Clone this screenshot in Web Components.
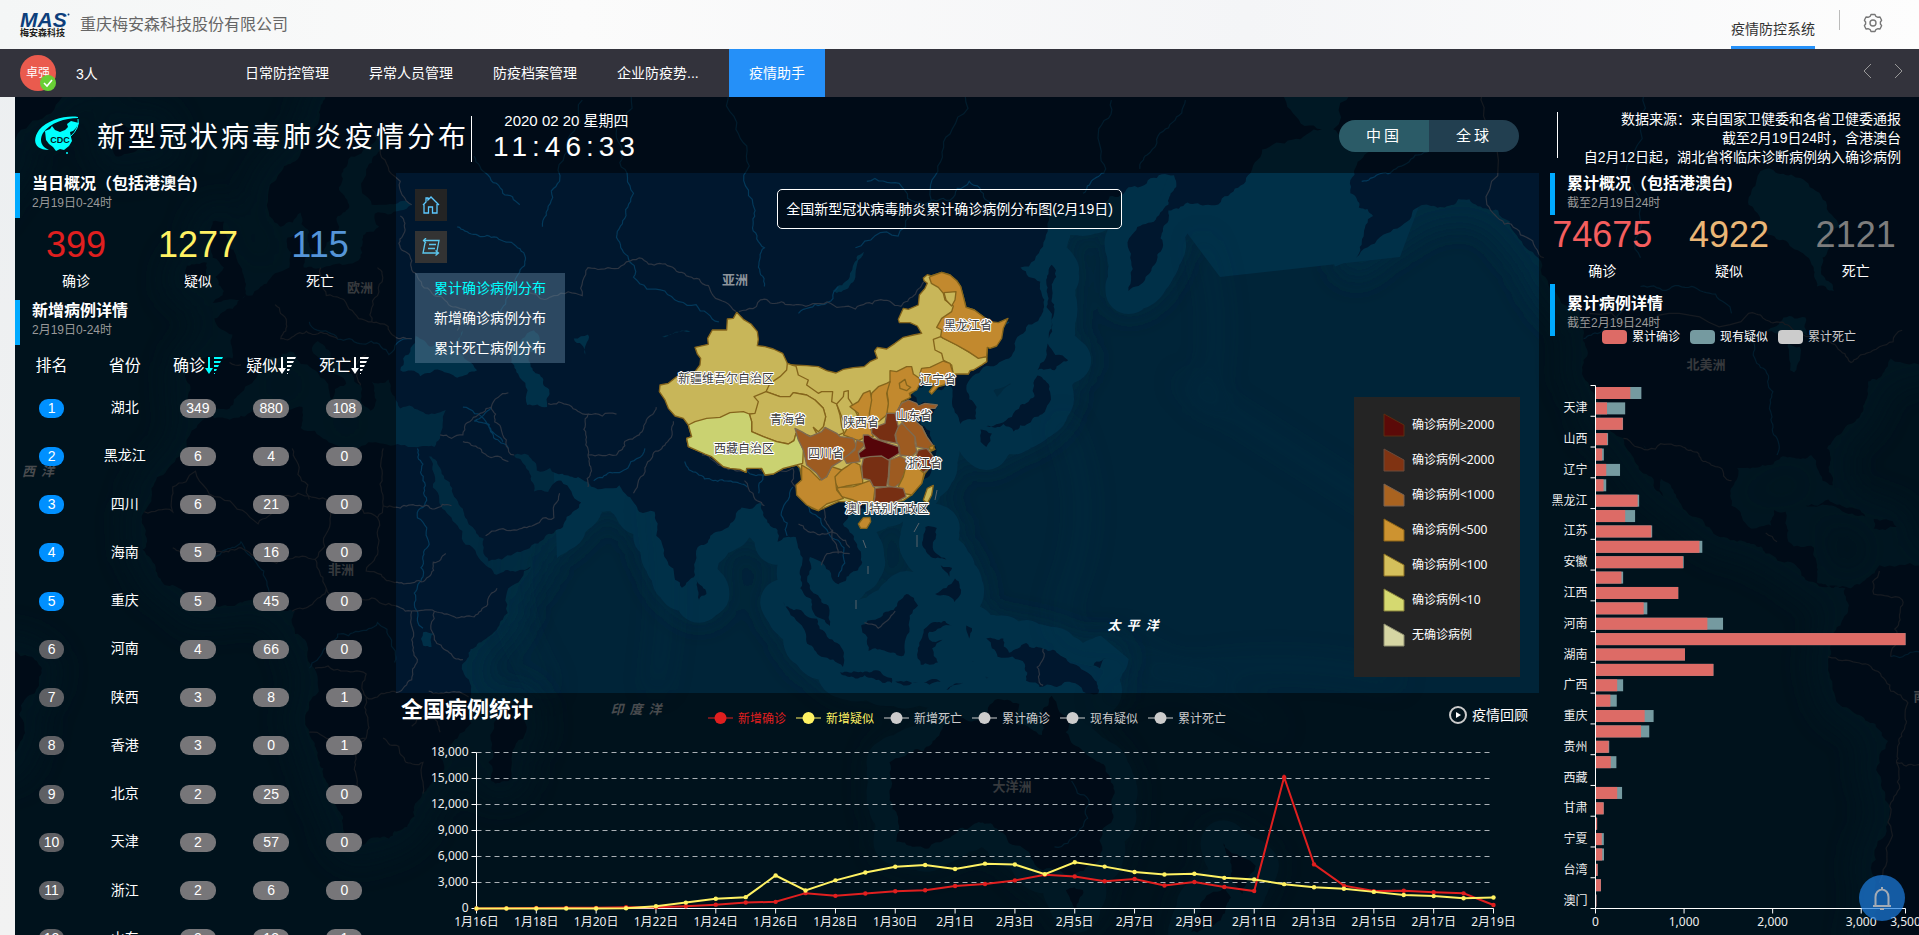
<!DOCTYPE html>
<html lang="zh-CN">
<head>
<meta charset="utf-8">
<title>疫情防控系统</title>
<style>
html,body{margin:0;height:100%}
body{display:flex;flex-direction:column;min-height:100vh;overflow:hidden;background:linear-gradient(#eceff1,#f2f2f2);font:14px/20px "Liberation Sans","Noto Sans CJK SC",sans-serif;color:#fff}
epidemic-board{flex:1;min-height:0;margin-left:15px}
</style>
</head>
<body>
<app-header></app-header>
<nav-bar></nav-bar>
<epidemic-board></epidemic-board>

<script>
function define(name, css, html, setup) {
  const tpl = document.createElement('template');
  tpl.innerHTML = '<style>*{box-sizing:border-box}button{font:inherit;color:inherit;border:0;background:none;padding:0;cursor:pointer}a{color:inherit;text-decoration:none}' + css + '</style>' + html;
  customElements.define(name, class extends HTMLElement {
    constructor() {
      super();
      this.attachShadow({ mode: 'open' }).append(tpl.content.cloneNode(true));
    }
    connectedCallback() { if (setup) setup(this, this.shadowRoot); }
  });
}

/* ---------- top bars ---------- */
define('app-header', `
:host{display:flex;align-items:center;height:49px;flex:none;padding:0 20px;color:#666;background:linear-gradient(90deg,#f4f6f6,#fbfbfb 30%,#f4f5f7 65%,#fdfdfd)}
.logo{display:flex;flex-direction:column;width:50px;margin-right:10px;font-weight:bold;color:#231f20;font-size:9px;line-height:10px;position:relative}
.logo b{font:italic bold 21px/17px "Liberation Sans",sans-serif;color:#0d3f7c}
.logo svg{position:absolute;right:0;top:2px}
.name{flex:1;font-size:16px;line-height:22px}
a{height:49px;padding-top:19px;line-height:20px;border-bottom:3px solid #2590f8;color:#333}
i{width:1px;height:20px;background:#bbb;margin:0 23px 9px 24px}
button{height:24px;margin-right:16px}`,
`<div class="logo"><b>MAS</b><span>梅安森科技</span><svg width="3" height="3"><circle cx="1.500" cy="1.500" r="1" fill="#0d3f7c"/></svg></div>
<span class="name">重庆梅安森科技股份有限公司</span>
<a href="#system">疫情防控系统</a><i></i>
<button aria-label="设置"><svg width="20" height="20" viewBox="0 0 20 20" fill="none" stroke="#777" stroke-width="1.400" stroke-linejoin="round"><path d="M8 1.500h4l.8 1.800 2.200 1 2-.3 1.600 3.300-1.200 1.700v2l1.200 1.700L17 16l-2-.3-2.200 1L12 18.500H8l-.8-1.800-2.200-1-2 .3-1.600-3.300L2.600 11V9L1.400 7.300 3 4l2 .3 2.200-1z"/><circle cx="10" cy="10" r="3"/></svg></button>`);

define('nav-bar', `
:host{display:flex;align-items:center;height:48px;flex:none;background:#33333c;padding:0 11px 0 20px}
.avatar{position:relative;width:36px;height:36px;border-radius:50%;background:#ea5b4e;font-size:12px;line-height:36px;padding-left:6px;white-space:nowrap}
.avatar svg{position:absolute;right:0;bottom:0}
.count{width:149px;margin-left:20px;padding-top:2px}
nav{display:flex;flex:1}
a{padding:0 20px;line-height:48px}
a.wide{width:132px}
a.on{background:#2590f8}
button{width:20px;height:20px;margin-left:10px}`,
`<div class="avatar">卓强<svg width="16" height="16"><circle cx="8" cy="8" r="8" fill="#69cf35"/><path d="M4 8l3 3 5-6" fill="none" stroke="#fff" stroke-width="1.600"/></svg></div>
<span class="count">3人</span>
<nav><a href="#daily">日常防控管理</a><a href="#abnormal">异常人员管理</a><a href="#files">防疫档案管理</a><a class="wide" href="#trend">企业防疫势...</a><a class="on" href="#assistant">疫情助手</a></nav>
<button aria-label="向左"><svg width="20" height="20" fill="none" stroke="#999"><path d="M13 1l-7 7 7 7"/></svg></button>
<button aria-label="向右"><svg width="20" height="20" fill="none" stroke="#999"><path d="M7 1l7 7-7 7"/></svg></button>`);

/* ---------- world map: Web Mercator, zoom level 3 ---------- */
const px = lon => 241 + lon * 5.689;
const py = lat => 634 - 325.95 * Math.log(Math.tan(Math.PI / 4 + lat * Math.PI / 360));
let seed = 7;
const rnd = () => (seed = (seed * 16807) % 2147483647) / 2147483647 - .5;
function rough(a, b, depth, out) {
  const dx = b[0] - a[0], dy = b[1] - a[1], len = Math.hypot(dx, dy);
  if (!depth || len < 4) { out.push(b); return; }
  const k = rnd() * .36;
  const m = [(a[0] + b[0]) / 2 - dy * k, (a[1] + b[1]) / 2 + dx * k];
  rough(a, m, depth - 1, out);
  rough(m, b, depth - 1, out);
}
function trace(text, closed) {
  const pts = text.trim().split(/\s+/).map(p => p.split(',').map(Number)).map(([x, y]) => [px(x), py(y)]);
  if (closed) pts.push(pts[0]);
  const out = [pts[0]];
  for (let i = 1; i < pts.length; i++) rough(pts[i - 1], pts[i], 4, out);
  return 'M' + out.map(p => p[0].toFixed(1) + ',' + p[1].toFixed(1)).join('L') + (closed ? 'Z' : '');
}
const LAND = [
'25,72 18,69.5 14,67.5 12,65 9,63.5 5,61.5 5,59 7,58 10.5,59.3 12,57.5 13,55.5 14.5,55.6 16.5,57 17,59 19,60 17.2,61.5 18,63 21.5,64.5 24,65.8 25.5,65 22,63 21.3,61 23,60 28,60.3 30,60 28,59.5 23.5,59.2 24.3,58 22,57.5 21,56 21,55 19,54.4 14.5,54 11,54 10.7,56 10.5,57.7 8.2,57 8.5,54 6,53.4 4.5,52.3 2,51 -1.5,49.5 -4.7,48.4 -1.5,46.5 -1.5,43.5 -8.5,43.7 -9.3,38.7 -8.8,37 -6,36.2 -2,36.8 0,39 3,42 4,43.4 8.5,44.4 10.5,42.8 14,41 16,38 16.5,39.5 18.5,40.2 15,42 12.5,44.5 13.5,45.7 16,43.5 19.5,41.5 21,38 22.8,36.5 23.8,38 23,40.5 26,40.8 27,38.5 28,36.8 32,36.3 36,36.6 35,32.5 34,31.2 30,31.2 25,31.7 20,31 19.5,30.4 15,32.3 10.5,34 10.8,37 3,36.9 -2,35.2 -5.5,35.8 -9.5,31 -13,27.7 -17,21 -16.5,16 -17.3,14.7 -15,11 -13,8.5 -8,4.4 -2,4.9 4,6.4 6,4.4 9.5,4 9.5,0 12,-5 13.7,-10 12,-17 14.5,-23 17,-29.5 18.4,-34 20,-34.8 26,-33.8 30.5,-30.5 33,-26 35.5,-23.5 35,-20 40.5,-15.5 40.3,-11 39,-6.5 41.5,-1.8 46,2.5 51,11.8 44.5,10.5 43,12 39.5,15.5 37.2,19.5 34,27 32.6,29.9 35,28 39,21.5 42.7,16.5 43.5,12.7 48,14 52.2,15.7 55,17.5 59.8,22.5 56.3,26 54,24.2 51.5,24.3 51,26 48,30 50.5,30 52,27.6 56.5,27.1 61.5,25.1 66.5,25.3 68,23.5 70,21 72.7,21 73,17 74.8,13 76.3,9.5 77.5,8.1 79.8,10.3 80.2,15 82.5,17 87,20.7 88,21.7 91.5,22.5 94.3,18 94.3,16 97.5,16.8 98.6,12 98.3,8 100.3,6 101.3,3 103.5,1.4 103.4,4.5 101,7 99.5,9.5 100,13.4 102.3,12.3 105,8.7 107,10.5 109.2,12.5 108,16 105.8,19 108,21.5 110.3,21.2 114,22.4 117,23.6 119.7,26 121.8,29 121.8,31.5 119.3,35 122.5,37.2 119,37.3 117.7,39 121.7,40.7 121.5,39 124.5,40 125,38 126.5,34.6 129.2,35.3 129.3,37 127.5,39.5 130.5,42.4 135,43.5 140.4,48.5 140.5,52.5 137,54 142,59 150,59.5 156,61.5 164,62.5 163,60 157,57.5 156,51.5 159,53 162,56 163,59.5 170,60 177,62.5 179.5,64.5 190,66 182,69 175,71 140,73',
'192,66 199,64.5 195,61 199,59 196,55 205,58.5 208,60 214,60.5 221,59.5 228,55 235,49.5 236,47 235.8,42 239,35 243,32.5 245,29 250,23.5 249,28 246.5,31.5 250,26 254.5,20.5 263,16 268,14 272.5,12.5 275,9.5 280,8.5 282,8 282.5,4 279.8,-1 279,-5 284,-14 289.5,-18.5 289,-28 286.5,-38 286,-48 302,-48 302,10 288,12 283,8 277,9 276.5,15 272,16 271.5,21 269.5,21.3 269,18.7 265.5,18.2 262,22 263,28 270,29.2 276,30 278,26 279.8,25.3 278.8,31 284,35.3 286,40.5 290,43.5 302,46 302,72 200,72',
'-5,50.2 1,51 0.5,53 -2,56 -3,58.5 -5,58.5 -5,55 -3,54 -4.5,53 -3,51.5','-10,52 -6,52.3 -6,54.5 -9.5,54.2','-22,64 -14,64.6 -15,66.3 -23,66',
'44,-25 47,-25 50,-15.5 49,-12 44.5,-16 43.5,-22','80,9.5 81.8,7 80.5,6','95.3,5.6 98,4.3 103,-.5 106,-3.3 105.8,-5.8 102,-4 98.6,1.5','105.3,-6.7 108.5,-6.7 114.4,-7.7 114.4,-8.6 108,-7.8',
'109,1.5 111.5,2.5 117,7 119,5 117.5,1 116.5,-3.8 110.3,-3','119.5,-5.4 119,-3 120,.8 125,1.6 121,.4 121,-1 123.3,-1 121.5,-2.5 122.5,-5','120.3,18.5 122.3,18.3 121.6,15.5 124,13 121,13.7 120,15','122,7 125.5,9.7 126.5,7 125.4,5.6','115,-8.3 119,-8.5 117,-9','120,-8.4 123,-8.4 121,-8.9','124,-9.8 127,-8.5 125,-9','127.5,1.5 128.5,1 128,-.8','123,12 125,11.5 124.5,10',
'131,34.3 135.5,35.6 137,37.3 139.5,38.5 140,41.3 142,39.5 140.8,36 138.5,34.7 135.8,33.5 134,34.6','130,33.8 132,33.2 131,31.2 130,32','140,42 141.8,45.4 145.4,43.3 143,42','142,46 143,49.5 143.3,53 142.5,54.3 141.8,51',
'131,-.8 134,-.8 135,-3.3 138,-1.6 144,-3.8 147.7,-6.2 150.5,-10.5 146,-8.5 143,-9.2 138,-8.2 137.8,-5.3 133,-4 132,-2.5','149,-5.8 152,-4.2 151,-6','114,-22 114,-26.5 115.7,-32 115.2,-34.3 118,-35 123.5,-34 129,-31.6 134,-33 138,-35.5 141,-38.3 146,-39 150,-37.5 153.2,-31 153.2,-25.5 149,-21 146,-18.8 145.3,-15 142.5,-10.8 141,-13 140.8,-17.5 136.5,-15.8 136.8,-12.2 132.5,-11.5 129.5,-15 125.5,-14.3 122.2,-18 117,-20.7','145,-41 148,-41 147,-43.5',
'172.7,-34.5 178.4,-37.7 176,-41.5 174,-39','172.7,-40.7 174,-42 171,-45.5 167,-46.3','-40,-3 -35,-6 -35.5,-9 -39,-14 -40,-22 -47,-22 -47,-3','-45,60 -40,65 -30,68.5 -22,70 -45,72','275,22 279,23 285.5,20.2 281,21.5','287,19.8 291,18.5 287,18.2'];
const LAKES = ['28,42 28.5,43.5 30.7,46.3 33.5,45 36,45 39,47 38,44.5 41.5,42 38,41 35,42 31.5,41.2','47,45 51.5,47 53,45 50.5,44.5 53,41 53.8,37 50.3,37.3 49,41 47.5,43','104,51.5 107,53 109.5,55.6 108,53 105.5,51.4','265,60 268,63 275,62 281,58 278,55 280,51.5 277,52 275,55.2 267.5,57.5','58.5,46 61,46.5 60.500,44','74,46.2 79,46.8 76,46.600','32,0.3 34,.2 33.5,-2.3 32,-2','268,47 275,48.5 275.5,46.4 270,46.6','272,45.5 274,45 273,41.7 272.3,42'];
const BORDERS = ['50,51.5 55,51 60,51 61,54 70,55 77,53.5 83,51 87,49.2','87.5,49.2 92,50.6 98,50 103,50.3 108,49.5 116,49.8 120,52.5','23,66 28,62 30,60','28,59 28,56 31,53 34,51 40,49 38,47','24,54 24,51 23,48 28,46 30,46','14,54 15,51 19,49.5 23,48','6,50 8,48 7,46 13,46.5 17,46','22,44 20,42 21,40','0,42.7 -2,43','35,33 39,33 44,37 47,39','44,37 46,33 48,30','39,32 42,31 47,29','43,17 48,18 55,20 56,24','61,25 61,30 61,36 54,37.5','61,30 66,30 70,33 73,37','66,36 61,36','69,24 71,28 75,32 76,35','81,30 85,28 88,27.5 92,27.5 97,28','88.5,26 90,24 92,22','97,28 98,24 101,21.5 103,22.5','98,19 101,17.500 104,18 105,14','102,22 103,19 105,17 107,15','102,12 103,14 107,14','-17,21 -12,21 -12,25 -8,27.500 3,19 10,24 15,23 24,20 25,22 25,31','25,22 31,22 37,22','24,20 24,15 22,11 27,9 33,10 36,14','-12,15 -6,15 0,15 4,13 13,13 15,23','9,31 10,27 12,23','13,13 15,8 9,4','15,8 19,5 27,5 31,4 34,4 41,3 45,8','30,4 30,-1 30,-8 24,-11 22,-11 22,-7 13,-6','34,4 34,-1 39,-4.500','33,-10 40,-11','22,-11 22,-18 12,-17','22,-18 20,-22 20,-28 17,-28.500','25,-18 29,-22 32,-22 32,-27','30,-16 33,-14 35,-17','219,69 219,60 226,57 229,55','237,49 265,49 270,48 277,46 283,43 288,45 292,47','243,32.5 252,31.4 257,29 262,26','268,17.500 270,16','288,11 287,7 292,6 291,-1 290,-4','279,-4 284,-5 290,-10 293,-12 292,-17 291,-22 290,-30 288,-40','291,-22 298,-22','141,-2.600 141,-9','109.600,2 112,1 115,4'];
const RIVERS = ['70,72 66,66 69,61 66,57 69,53 80,50 84,48','82,72 87,66 90,60 92,56 92,52','127,72 125,66 121,60 108,56','105,52 102,50 98,49','110,62 120,60 128,62 135,60','45,48 48,52 50,55 44,57 38,58','31,31 32,26 31,20 33,16 32,10 31,4 32,1','44,37 41,35 46,32','47,31 43,35 39,37','62,26 68,28 71,31','89,25 83,26 78,29','91,24 92,27 87,29','105,10 106,15 103,18 100,21 98,28','96,17 95,21 97,25','5,6 4,11 0,16 -5,13','12,-6 17,0 24,2 27,-5','30,46 26,44 19,46 12,48','135,48 131,48 127,50 121,53','250,70 244,62 246,55','270,30 269,36 268,42 266,47','262,49 255,52 246,52','236,46 241,48 243,50','308,-2 298,-3 290,-4','143,-35 147,-33 149,-28 146,-25','153,68 152,63 148,61','60,68 56,62 53,58','41,64 46,61 49,60','166,68 161,65 158,63','210,65 203,63 197,62'];
const C = { y:'#c8b659', t:'#cad271', o:'#c2892e', b:'#9d5b21', r:'#772f13', d:'#550509' };
const PROV = [
['y','290,187 310,208 333,222 352,245 355,268 352,287 375,290 400,297 428,310 442,340 455,345 500,347 535,350 560,362 588,369 610,358 640,353 672,350 690,335 712,325 704,303 712,292 740,297 765,280 790,262 820,255 845,250 832,228 810,218 778,218 775,208 790,175 805,178 835,165 838,135 855,115 862,100 852,92 850,84 862,74 874,78 905,67 930,75 950,92 962,110 970,140 978,172 1003,180 1030,200 1050,215 1040,320 1040,335 1025,345 1000,360 990,362 985,372 965,370 940,372 912,405 845,385 820,425 808,435 785,455 820,458 850,490 815,515 845,530 860,560 885,598 870,605 880,625 872,650 855,670 845,700 815,735 790,752 700,765 650,755 595,755 535,782 515,775 500,762 470,733 470,705 485,690 480,655 470,645 430,655 400,672 375,675 365,655 320,655 318,667 300,658 270,655 250,650 215,620 195,612 145,590 140,565 155,560 145,525 130,505 105,498 85,475 75,450 58,425 60,405 85,400 110,380 165,365 180,345 182,325 172,312 165,292 205,283 203,265 217,240 235,240 260,240 262,207 280,205'],
['y','455,345 442,340 440,360 420,380 390,400 378,425 420,440 450,440 460,428 500,435 525,450 550,475 557,500 550,530 520,532 535,560 585,560 612,548 605,530 600,495 590,462 575,455 578,425 545,425 535,430 500,405 505,390 475,375 468,348'],
['y','342,440 378,425 420,440 450,440 460,428 500,435 525,450 550,475 557,500 550,530 535,545 520,532 535,560 510,558 480,548 468,550 462,572 445,582 410,575 370,560 335,545 335,515 328,492 345,490 355,455'],
['y','590,462 610,440 612,425 625,422 625,445 635,460 652,495 648,520 620,535 605,500'],
['t','145,525 165,515 200,505 240,502 270,488 310,485 328,492 335,515 335,545 370,560 410,575 445,582 462,572 468,550 480,575 490,600 488,640 470,645 430,655 400,672 375,675 365,655 320,655 318,667 300,658 270,655 250,650 215,620 195,612 145,590 140,565 155,560'],
['y','902,260 950,285 985,305 1015,322 1040,320 1040,335 1025,345 1000,360 990,362 985,372 940,372 935,345 910,330 905,310 885,300 880,268'],
['o','874,78 905,67 930,75 950,92 962,110 970,140 978,172 1003,180 1030,200 1050,215 1075,218 1104,205 1090,235 1085,265 1070,288 1050,295 1042,292 1040,320 1015,325 985,305 950,285 910,265 902,260 905,240 890,232 905,205 935,185 940,168 915,150 910,130 895,112 874,100 868,82'],
['y','912,128 948,125 945,150 935,168 918,150'],
['o','845,355 870,352 910,333 930,340 940,372 935,385 912,405 895,410 875,432 868,425 885,402 860,395 840,390 840,370'],
['o','750,362 770,365 800,350 815,350 820,372 838,385 840,400 830,420 808,430 812,442 785,455 770,490 740,490 745,455 740,420 750,395'],
['o','778,400 795,388 800,405 812,412 800,422 780,415'],
['o','695,430 715,410 740,400 750,395 740,430 745,460 740,495 715,515 690,515 688,480'],
['o','690,422 695,450 688,490 690,530 700,560 680,560 655,572 610,555 625,530 650,520 655,490 630,470 655,455 670,430'],
['b','785,460 805,450 830,460 835,468 855,460 892,465 885,475 860,475 845,495 825,510 800,515 765,505 770,485'],
['b','765,540 785,520 800,530 825,555 825,580 830,605 815,620 780,615 778,590 770,575'],
['b','785,515 825,512 845,530 860,560 878,585 865,598 830,590 825,560 800,535'],
['o','868,590 882,586 880,600 870,600'],
['b','750,630 780,618 800,630 795,665 780,700 760,715 745,705 748,670'],
['r','740,490 765,490 770,510 775,530 765,555 770,580 745,575 720,570 695,550 695,535 735,520'],
['r','835,600 860,595 880,620 875,650 850,668 830,650 825,625'],
['o','800,640 830,650 852,670 845,700 815,735 790,730 775,710 790,680'],
['o','575,680 620,650 640,635 660,645 668,690 668,700 620,708 595,715'],
['o','600,712 640,710 690,692 705,715 700,755 670,762 640,750 605,740 590,715'],
['r','705,715 750,710 790,715 798,740 770,755 700,765 705,740'],
['o','485,645 510,660 540,690 560,680 575,650 605,660 585,680 590,720 610,745 560,762 535,782 500,765 470,735 468,705 485,690'],
['b','465,535 485,545 510,560 545,545 555,532 590,550 600,560 640,565 650,590 625,615 600,635 575,650 560,680 545,690 530,670 500,645 490,600 475,570'],
['b','650,570 680,580 655,605 660,635 620,640 612,625 645,600'],
['r','670,625 690,618 725,618 748,630 745,680 740,710 700,710 690,690 668,685 665,650'],
['d','670,555 685,555 700,565 745,580 775,590 778,610 745,630 725,618 690,620 660,625 655,610 675,595 670,575'],
['o','655,822 670,803 690,802 692,815 680,835 662,835'],['y','850,750 862,715 880,706 875,735 862,760']];

const NAMES = [['新疆维吾尔自治区',726,383],['青海省',788,424],['西藏自治区',744,453],['四川省',826,458],['陕西省',861,427],['山东省',914,420],['辽宁省',938,384],['黑龙江省',968,330],['浙江省',924,468],['澳门特别行政区',887,513]];
const PLACES = [['欧洲',360,292,'#6d737b'],['非洲',341,574,'#6d737b'],['亚洲',735,284,'#8d949c'],['北美洲',1706,369,'#6d737b'],['大洋洲',1012,791,'#6d737b'],['南',1920,701,'#8b9096']];
const SEAS = [['西  洋',38,476,'#92979d'],['太  平  洋',1133,630,'#fff'],['印  度  洋',636,714,'#92979d']];

define('world-map', `
:host{display:block}
svg{display:block;width:100%;height:100%}
text{font-family:"Noto Sans CJK SC",sans-serif;text-anchor:middle}
.p{font-size:12px;fill:#3c3c3c;stroke:#fff;stroke-width:2;paint-order:stroke;stroke-linejoin:round}
.c{font-size:13px;font-weight:bold}
.s{font-size:13px;font-weight:bold;font-style:italic;white-space:pre}`,
`<svg viewBox="15 97 1904 838" preserveAspectRatio="xMidYMid slice" aria-label="地图"></svg>`,
(el, root) => {
  const land = LAND.map(s => trace(s, true)).join('');
  const lakes = LAKES.map(s => trace(s, true)).join('');
  root.querySelector('svg').innerHTML =
    `<defs><filter id="soft" x="-5%" y="-5%" width="110%" height="110%"><feGaussianBlur stdDeviation="14"/></filter>
    <clipPath id="asia"><path d="M540 97H1470L1400 240 1180 330 1130 470 1010 560 1130 660 1350 740V935H700L560 640z"/></clipPath></defs>
    <rect x="-200" y="-200" width="2400" height="1400" fill="#002438"/>
    <path d="${land}" fill="#002d43" stroke="#002b41" stroke-width="40" stroke-linejoin="round" filter="url(#soft)"/>
    <path d="${land}" clip-path="url(#asia)" fill="#003048" stroke="#003048" stroke-width="46" stroke-linejoin="round"/>
    <path d="M1200 97h260l-60 160-180 20-60-80z" fill="#003048"/>
    <g fill="none" stroke="#003048" stroke-width="8" opacity=".5" filter="url(#soft)"><path d="M1060 420q40 80 10 160t50 60l160 90M1200 240q30 80 5 170M655 500q20 90 0 190M520 520q-30 80 30 170M1180 380L1400 520M1100 700q140-60 300-20"/></g>
    <path d="${land}" fill="#00172e"/>
    <path d="${lakes}" fill="#003048"/>
    <path d="${RIVERS.map(s => trace(s)).join('')}" fill="none" stroke="#03395a" stroke-width="1.200"/>
    <path d="${BORDERS.map(s => trace(s)).join('')}" fill="none" stroke="#2c3542" stroke-width="1.200"/>
    <path d="M937 490l-2 10M919 523l-5 9M863 540l3 8M917 535v12M868 566v8M856 600v9" stroke="#59636b" fill="none"/>
    <g transform="translate(640 250) scale(.33333)" stroke-width="4" stroke-linejoin="round">${
      PROV.map(([c, d]) => `<polygon points="${d}" fill="${C[c]}" stroke="${'brd'.includes(c) ? '#7e6a50' : '#85651c'}"/>`).join('')}</g>` +
    PLACES.map(([t, x, y, f]) => `<text class="c" x="${x}" y="${y}" fill="${f}">${t}</text>`).join('') +
    SEAS.map(([t, x, y, f]) => `<text class="s" x="${x}" y="${y}" fill="${f}">${t}</text>`).join('') +
    NAMES.map(([t, x, y]) => `<text class="p" x="${x}" y="${y}">${t}</text>`).join('');
});

/* ---------- small parts ---------- */
define('section-title', `
:host{display:block;border-left:5px solid #00aaff;padding-left:12px}
h2{margin:0;font-size:16px;line-height:22px}
p{margin:0;font-size:12px;line-height:16px;color:#999}`,
`<h2><slot></slot></h2><p><slot name="sub"></slot></p>`);

define('stat-figure', `
:host{display:flex;flex-direction:column;align-items:center;gap:8px}
b{font-weight:normal;font-size:36px;line-height:36px}
span{line-height:20px;color:#fff}`,
`<b><slot></slot></b><span><slot name="label"></slot></span>`);

define('region-switch', `
:host{display:flex;border-radius:16px;overflow:hidden}
button{width:90px;height:32px;letter-spacing:3px;background:#223f50;font-size:15px}
.on{background:#2b5b67}`,
`<button class="on">中国</button><button>全球</button>`);

define('board-header', `
:host{display:flex;align-items:center;background:rgba(0,0,0,.5);padding:0 18px 0 19px}
h1{margin:6px 2px 0 17px;font-weight:normal;font-size:28px;line-height:36px;letter-spacing:3px;white-space:nowrap}
i{width:1px;height:46px;background:#fff;flex:none}
.left{margin-top:8px}
.clock{padding-left:21px;text-align:center;flex:1;display:flex;flex-direction:column;align-items:flex-start}
.clock div{display:flex;flex-direction:column;align-items:center}
.date{font-size:15px;line-height:24px}
time{font-size:28px;line-height:28px;letter-spacing:5px}
region-switch{margin-right:38px;margin-top:2px}
p{margin:6px 0 0;width:343px;text-align:right;line-height:19px;white-space:nowrap}`,
`<svg width="46" height="38" viewBox="0 0 46 38"><path d="M44 1C34-1 14 3 5 14-2 24 0 34 15 34 7 31 5 24 9 17 16 7 31 2 44 2z" fill="#0ff"/><path d="M44 3q2 9-8 18" fill="none" stroke="#0ff"/><path d="M11 15l5-2 2-3 3 4 5 2 5-2 3-3-1-3 4-3 4 1 4 1-3 5-3 3-3 1 1 5 1 4-3 5-5 4-4-1-4 2-3-4-4-3-3-4z" fill="#0ff"/><circle cx="33" cy="37" r="1" fill="#0ff"/><text x="26" y="27" text-anchor="middle" font-size="9" font-weight="bold" font-family="Liberation Sans, sans-serif" fill="#001320">CDC</text></svg>
<h1>新型冠状病毒肺炎疫情分布</h1><i class="left"></i>
<div class="clock"><div><span class="date">2020 02 20 星期四</span><time>11:46:33</time></div></div>
<region-switch></region-switch><i></i>
<p>数据来源：来自国家卫健委和各省卫健委通报<br>截至2月19日24时，含港澳台<br>自2月12日起，湖北省将临床诊断病例纳入确诊病例</p>`);

/* ---------- ranking table ---------- */
const ROWS = [['湖北',349,880,108],['黑龙江',6,4,0],['四川',6,21,0],['海南',5,16,0],['重庆',5,45,0],['河南',4,66,0],['陕西',3,8,1],['香港',3,0,1],['北京',2,25,0],['天津',2,57,0],['浙江',2,6,0],['山东',2,13,1]];
const sortIcon = `<svg width="18" height="18" viewBox="0 0 18 18" fill="currentColor"><path d="M3 0h2v11h3l-4 6-4-6h3zM9 0h9l-1 2H9zM9 4h7l-1 2H9zM9 8h5l-1 2H9zM9 12h3l-1 2H9zM9 16h1v1H9z"/></svg>`;
define('case-table', `
:host{display:block;width:366px}
table{width:100%;height:617px;table-layout:fixed;border-collapse:collapse;text-align:center}
td,th{padding:0;font-weight:normal}
th{height:38px;font-size:16px;padding-top:3px;white-space:nowrap}
th button{display:inline-flex;align-items:center}
.on svg{color:#0ff}
span{display:inline-block;width:36px;height:19px;line-height:19px;border-radius:9px;background:#777679;vertical-align:middle}
.rank span{width:25px;background:#5f6064}
tr:nth-child(-n+5) .rank span{background:#0090ff}`,
`<table><thead><tr><th>排名</th><th>省份</th><th class="on"><button>确诊${sortIcon}</button></th><th><button>疑似${sortIcon}</button></th><th><button>死亡${sortIcon}</button></th></tr></thead><tbody>${
  ROWS.map((r, i) => `<tr><td class="rank"><span>${i + 1}</span></td><td>${r[0]}</td>${r.slice(1).map(v => `<td><span>${v}</span></td>`).join('')}</tr>`).join('')}</tbody></table>`);

/* ---------- map tools ---------- */
const LEVELS = [['确诊病例≥2000','#5b0a08','#5a2d10'],['确诊病例<2000','#803312','#6b4a3a'],['确诊病例<1000','#a96320','#7a6250'],['确诊病例<500','#cd9330','#8d6417'],['确诊病例<100','#d4bf5b','#8a6f22'],['确诊病例<10','#d5d970','#86803a'],['无确诊病例','#d5d5a3','#8f8f70']];
define('map-tools', `
:host{display:grid;grid-template:1fr / 150px 1fr 166px;padding:16px 19px}
.left{display:flex;flex-direction:column;gap:10px;align-items:flex-start}
.icon{display:flex;align-items:center;justify-content:center;width:32px;height:32px;background:#242424}
.icon.alt{background:#333}
ul{list-style:none;margin:0;padding:0}
.menu{width:150px;background:rgba(88,122,148,.5)}
.menu button{width:100%;height:30px}
.menu .on{color:#0ff}
h3{justify-self:center;align-self:start;margin:0 20px 0 0;padding:9px 8px;border:1px solid #fff;border-radius:5px;background:rgba(0,0,0,.4);font-size:14px;line-height:20px;font-weight:normal;white-space:nowrap}
.legend{align-self:end;height:280px;padding:10px 0 0 29px;background:#242424;font:12px/35px "Noto Sans","Open Sans","Noto Sans CJK SC",sans-serif}
.legend li{display:flex;align-items:center;gap:7px;height:35px}`,
`<div class="left"><button class="icon" aria-label="首页"><svg width="18" height="18" viewBox="0 0 18 18" fill="none" stroke="#5cc8ff" stroke-width="1.300"><path d="M2 8v9h4.500v-6h4v6H15V8M1 9l3-3V2h2v2l3-3 8 8"/></svg></button>
<button class="icon alt" aria-label="切换"><svg width="20" height="18" viewBox="0 0 20 18" fill="none" stroke="#5cc8ee" stroke-width="1.300"><path d="M5 0L2.500 2.500 5 5M2.500 2.500h15.500L16 13M4 5L2 15h15M14.500 12.500l3 2.500-3 2.500M8 6.500h7M7 10.500h7"/></svg></button>
<ul class="menu"><li><button class="on">累计确诊病例分布</button></li><li><button>新增确诊病例分布</button></li><li><button>累计死亡病例分布</button></li></ul></div>
<h3>全国新型冠状病毒肺炎累计确诊病例分布图(2月19日)</h3>
<ul class="legend">${LEVELS.map(l => `<li><svg width="22" height="24"><path d="M1 1l20 11v11H1z" fill="${l[1]}" stroke="${l[2]}"/></svg>${l[0].replace('<', '&lt;')}</li>`).join('')}</ul>`);

/* ---------- charts, redrawn whenever their box changes ---------- */
const chartCss = `svg{display:block;width:100%;height:100%;position:absolute;inset:0}
text{font:12px "Noto Sans","Noto Sans CJK SC",sans-serif;fill:#eee}.e{text-anchor:end}.m{text-anchor:middle}`;
function chart(draw) {
  return (el, root) => {
    const svg = root.querySelector('svg');
    new ResizeObserver(() => { svg.innerHTML = draw(svg.clientWidth, svg.clientHeight); }).observe(svg);
  };
}
const NEW = [4,17,59,77,77,149,131,259,444,688,769,1771,1459,1737,1982,2102,2590,2829,3235,3887,3694,3143,3399,2656,3062,2478,2015,15152,5090,2641,2009,2048,1888,1749,399];
const SUS = [0,0,0,0,0,27,257,680,1118,1309,3806,2077,3248,4148,4812,5019,4562,5173,5072,3971,5328,4833,4214,3916,4008,3536,3342,2807,2450,2277,1918,1563,1432,1185,1277];
define('line-chart', ':host{display:block;position:relative}' + chartCss, '<svg></svg>', chart((w, h) => {
  const x0 = 80.5, x1 = w - 45.5, y0 = 15.5, y1 = h - 26.500;
  const X = i => x0 + (x1 - x0) * i / 34, Y = v => y1 - (y1 - y0) * v / 18000;
  let s = '';
  for (let v = 0; v <= 18000; v += 3000) {
    const y = Math.floor(Y(v)) + .5;
    s += `<path d="M${x0 - 5} ${y}H${x0}" stroke="#fff"/><text class="e" x="${x0 - 8}" y="${y + 3}">${v.toLocaleString('en')}</text>`;
    if (v) s += `<path d="M${x0} ${y}H${x1}" stroke="#aab0b5" stroke-dasharray="5 4"/>`;
  }
  s += `<path d="M${x0} ${y0}V${y1}H${x1}" fill="none" stroke="#fff"/>`;
  for (let i = 0; i < 35; i += 2) {
    const d = i < 16 ? `1月${16 + i}日` : `2月${i - 15}日`;
    s += `<path d="M${X(i)} ${y1}v5" stroke="#fff"/><text class="m" x="${X(i)}" y="${y1 + 17}">${d}</text>`;
  }
  for (const [data, c] of [[NEW, '#e01f1f'], [SUS, '#fff263']]) {
    s += `<polyline points="${data.map((v, i) => X(i) + ',' + Y(v)).join(' ')}" fill="none" stroke="${c}" stroke-width="2"/>`;
    s += data.map((v, i) => `<circle cx="${X(i)}" cy="${Y(v)}" r="2.200" fill="${c}"/>`).join('');
  }
  return s;
}));

const BARS = [[393,518],[130,335],[307,311],[132,142],[75,94],[121,277],[91,121],[476,493],[335,447],[630,640],[1173,1206],[987,996],[293,312],[934,934],[544,585],[1263,1440],[3500,3500],[1010,1010],[1331,1331],[245,312],[168,240],[555,656],[514,607],[148,155],[172,236],[1,1],[245,300],[91,93],[18,18],[71,94],[76,96],[24,24],[60,62],[10,10]];
const CITY = ['天津','山西','辽宁','黑龙江','江苏','安徽','江西','河南','湖南','广西','重庆','贵州','西藏','甘肃','宁夏','台湾','澳门'];
define('bar-chart', ':host{display:block;position:relative}' + chartCss, '<svg></svg>', chart((w, h) => {
  const x0 = 56.5, x1 = w - 13.5, y0 = 55.5, y1 = h - 26.500, step = (y1 - y0) / 34;
  const X = v => x0 + (x1 - x0) * v / 3500;
  let s = '';
  [['累计确诊','#dd6b66','#fff'],['现有疑似','#759aa0','#fff'],['累计死亡','#ccc','#ccc']].forEach(([t, c, f], i) => {
    const x = w / 2 - 127 + i * 88;
    s += `<rect x="${x}" width="25" height="14" rx="4" fill="${c}"/><text x="${x + 30}" y="11" style="fill:${f}">${t}</text>`;
  });
  BARS.forEach(([a, b], i) => {
    const y = y0 + i * step + 1.500;
    s += `<rect x="${x0}" y="${y}" width="${X(b) - x0}" height="12" fill="#759aa0"/><rect x="${x0}" y="${y}" width="${X(a) - x0}" height="12" fill="#dd6b66"/>`;
    if (i % 2) s += `<text class="e" x="${x0 - 8}" y="${y + 10}">${CITY[(i - 1) / 2]}</text>`;
    else s += `<path d="M${x0 - 5} ${y - 1.500}H${x0}" stroke="#fff"/>`;
  });
  s += `<path d="M${x0} ${y0}V${y1}H${x1}M${x0 - 5} ${y1}H${x0}" fill="none" stroke="#fff"/>`;
  for (const v of [0, 1000, 2000, 3000, 3500]) s += `<path d="M${X(v)} ${y1}v5" stroke="#fff"/><text class="m" x="${X(v)}" y="${y1 + 17}">${v.toLocaleString('en')}</text>`;
  return s;
}));

define('trend-panel', `
:host{display:flex;flex-direction:column}
header{display:grid;grid-template-columns:1fr auto 1fr;align-items:start;height:44px;flex:none;padding:0 11px 0 5px}
h2{margin:0;font-size:22px;line-height:34px}
ul{display:flex;gap:10px;list-style:none;margin:15px 0 0 5px;padding:0;font:12px/20px "Noto Sans CJK SC",sans-serif;color:#ccc}
li{display:flex;align-items:center;gap:5px}
.c0{color:#e01f1f}
.c1{color:#fff263}
button{display:flex;align-items:center;gap:5px;justify-self:end;margin-top:11px;height:22px}
line-chart{flex:1;min-height:0}`,
`<header><h2>全国病例统计</h2><ul>${['新增确诊','新增疑似','新增死亡','累计确诊','现有疑似','累计死亡'].map((t, i) => `<li class="c${i}"><svg width="25" height="14" stroke="currentColor" fill="currentColor"><path d="M0 7h25" stroke-width="2" opacity=".5"/><circle cx="12.500" cy="7" r="6" stroke="none"/></svg>${t}</li>`).join('')}</ul>
<button><svg width="18" height="18" fill="none" stroke="#ccc" stroke-width="2"><circle cx="9" cy="9" r="8"/><path d="M7 6l5 3-5 3z" fill="#fff" stroke="none"/></svg>疫情回顾</button></header><line-chart></line-chart>`);

/* ---------- board ---------- */
define('epidemic-board', `
:host{position:relative;display:grid;grid-template:76px 520px minmax(0,1fr) / 381px minmax(0,1fr) 380px;overflow:hidden;isolation:isolate}
world-map{position:absolute;inset:0;z-index:-1}
board-header{grid-column:1/-1}
.side{grid-row:2/4;display:flex;flex-direction:column;min-height:0;overflow:hidden;background:rgba(0,0,0,.5)}
.side.r{grid-column:3}
map-tools{grid-row:2;grid-column:2}
trend-panel{grid-row:3;grid-column:2;background:rgba(0,0,0,.5)}
.stats{display:grid;grid-template-columns:repeat(3,1fr);flex:none}
.l section-title{height:45px;flex:none}
.l .stats{width:366px;height:82px;padding-top:9px}
.r section-title{height:42px;flex:none;margin-left:11px}
.r section-title.low{height:52px;padding-top:9px}
.r .stats{height:69px;padding-top:2px}
case-table{flex:none}
bar-chart{flex:1;min-height:0;margin-top:-6px}
.bell{position:absolute;right:14px;bottom:14px;width:46px;height:46px;border-radius:50%;background:rgba(28,126,224,.7);display:flex;align-items:center;justify-content:center}`,
`<world-map></world-map><board-header></board-header>
<section class="side l"><section-title>当日概况（包括港澳台)<span slot="sub">2月19日0-24时</span></section-title>
<div class="stats"><stat-figure style="color:#e01f1f">399<span slot="label">确诊</span></stat-figure><stat-figure style="color:#fff263">1277<span slot="label">疑似</span></stat-figure><stat-figure style="color:#5595d8">115<span slot="label">死亡</span></stat-figure></div>
<section-title>新增病例详情<span slot="sub">2月19日0-24时</span></section-title><case-table></case-table></section>
<map-tools></map-tools>
<trend-panel></trend-panel>
<section class="side r"><section-title>累计概况（包括港澳台)<span slot="sub">截至2月19日24时</span></section-title>
<div class="stats"><stat-figure style="color:#f55e5e">74675<span slot="label">确诊</span></stat-figure><stat-figure style="color:#eab676">4922<span slot="label">疑似</span></stat-figure><stat-figure style="color:#7d7d7d">2121<span slot="label">死亡</span></stat-figure></div>
<section-title class="low">累计病例详情<span slot="sub">截至2月19日24时</span></section-title><bar-chart></bar-chart></section>
<button class="bell" aria-label="通知"><svg width="22" height="24" viewBox="0 0 22 24" fill="none" stroke="#a3abb5" stroke-width="2"><path d="M11 1v2M2 20h18M4.500 20V11a6.500 7.500 0 0 1 13 0v9M9 23h4"/></svg></button>`);
</script>
</body>
</html>
